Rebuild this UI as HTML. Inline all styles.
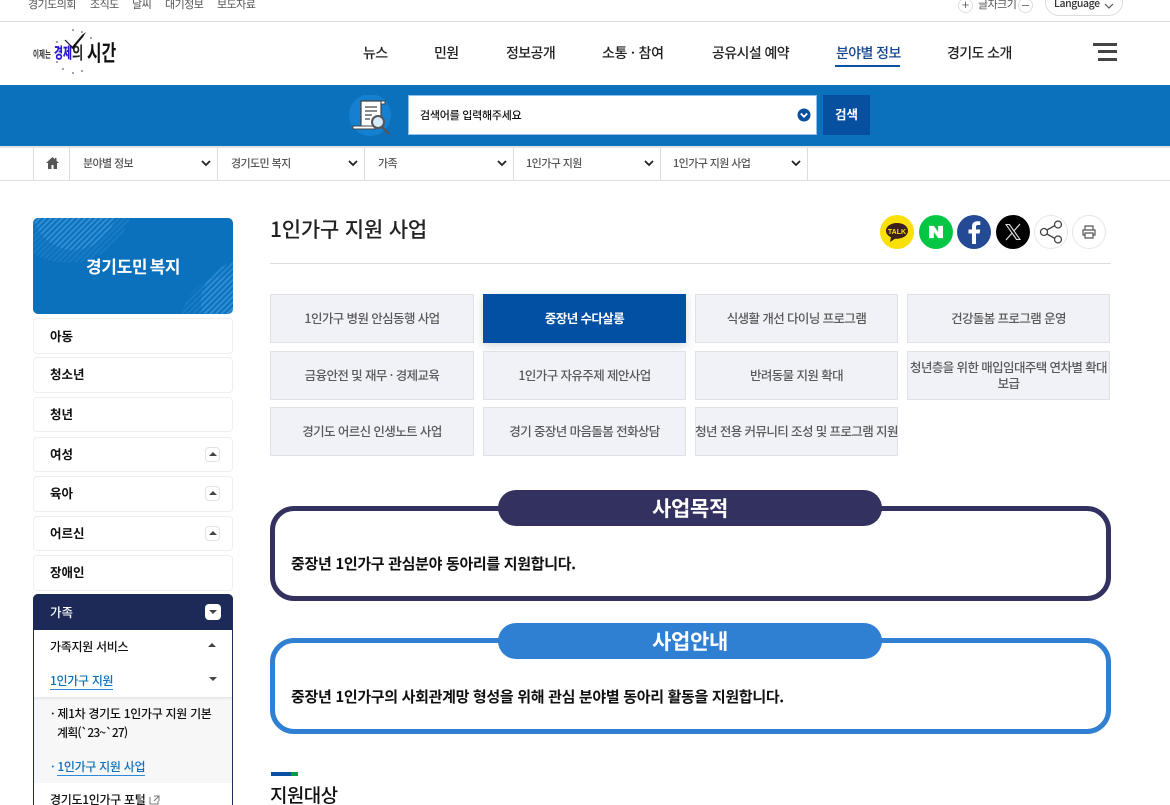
<!DOCTYPE html>
<html lang="ko"><head><meta charset="utf-8"><title>1인가구 지원 사업</title>
<style>
*{box-sizing:border-box}
html,body{margin:0;padding:0;width:1170px;height:805px;overflow:hidden}
body{background:#fff;font-family:"Liberation Sans","Noto Sans CJK KR",sans-serif;color:#111}
#w{position:relative;width:1170px;height:805px;overflow:hidden}
.a{position:absolute;white-space:nowrap}
.t{position:absolute;white-space:nowrap;font-family:"Noto Sans CJK KR","Liberation Sans",sans-serif}
.line{position:absolute;background:#ddd;height:1px}
.nav{font-size:14px;font-weight:500;color:#222;top:43px;line-height:20px;letter-spacing:-.6px}
.top{font-size:11px;color:#555;top:-4px;line-height:16px;letter-spacing:-.55px}
.bc{position:absolute;top:147px;height:34px;border-right:1px solid #ddd;font-size:11px;color:#555;line-height:32px;padding-left:13px;font-family:"Noto Sans CJK KR",sans-serif;letter-spacing:-.6px;font-weight:500}
.bc svg{position:absolute;right:5px;top:12px}
.card{position:absolute;height:49px;background:#f1f2f8;border:1px solid #e1e2e8;font-size:12.5px;color:#5a5a5a;text-align:center;display:flex;align-items:center;justify-content:center;line-height:16px;font-family:"Noto Sans CJK KR",sans-serif;letter-spacing:-.6px;white-space:nowrap;font-weight:500;padding-bottom:2px}
.side{position:absolute;left:33px;width:200px;height:36px;border:1px solid #eee;border-radius:4px;font-size:12.5px;font-weight:700;line-height:32px;padding-left:16px;font-family:"Noto Sans CJK KR",sans-serif;color:#111}
.ub{position:absolute;right:12px;top:9px;width:15px;height:15px;border:1px solid #e2e2e2;border-radius:4px;background:#fff}
.ub:after{content:"";position:absolute;left:2.500px;top:4px;border:4px solid transparent;border-top:0;border-bottom:4px solid #444}
.box{position:absolute;left:270px;width:841px;border:5px solid;border-radius:24px;background:#fff}
.pill{position:absolute;left:498px;width:384px;height:36px;border-radius:18px;color:#fff;font-size:21px;font-weight:700;text-align:center;line-height:37px;font-family:"Noto Sans CJK KR",sans-serif;letter-spacing:-.3px}
.bt{font-size:15px;font-weight:700;color:#111;line-height:22px;letter-spacing:-.32px}
.circ{position:absolute;top:215px;width:34px;height:34px;border-radius:50%;display:flex;align-items:center;justify-content:center}
.sub{font-size:12px;line-height:20px;font-weight:500;letter-spacing:-.3px}
</style></head><body><div id="w">

<span class="t top" style="left:28px">경기도의회</span>
<span class="t top" style="left:90px">조직도</span>
<span class="t top" style="left:132px">날씨</span>
<span class="t top" style="left:165px">대기정보</span>
<span class="t top" style="left:217px">보도자료</span>

<div class="a" style="left:958px;top:-2px;width:15px;height:15px;border:1px solid #ddd;border-radius:50%;color:#666;font-size:13px;line-height:12px;text-align:center">+</div>
<span class="t top" style="left:978px">글자크기</span>
<div class="a" style="left:1018px;top:-2px;width:15px;height:15px;border:1px solid #ddd;border-radius:50%"><div style="position:absolute;left:3px;top:6px;width:7px;height:1px;background:#777"></div></div>
<div class="a" style="left:1045px;top:-12px;width:78px;height:28px;border:1px solid #ddd;border-radius:14px;background:#fff"></div>
<span class="t" style="left:1054px;top:-3px;font-size:10.500px;color:#333;line-height:14px;letter-spacing:-.4px;font-weight:500">Language</span>
<svg class="a" style="left:1104px;top:3px" width="10" height="7" viewBox="0 0 10 7"><path d="M1 1l4 4 4-4" fill="none" stroke="#555" stroke-width="1.200"/></svg>
<div class="line" style="left:0;top:21px;width:1170px"></div>

<!-- logo -->
<span class="t" style="left:33px;top:44px;font-size:10px;font-weight:700;line-height:20px;color:#333;transform:scaleX(.65);transform-origin:0 0">이제는</span>
<span class="t" style="left:54px;top:42px;font-size:15px;font-weight:900;line-height:22px;color:#2a18d0;transform:scaleX(.65);transform-origin:0 0">경제</span>
<span class="t" style="left:72px;top:40px;font-size:17px;font-weight:700;line-height:24px;color:#222;transform:scaleX(.72);transform-origin:0 0">의</span>
<span class="t" style="left:87px;top:38px;font-size:22px;font-weight:700;line-height:28px;color:#111;transform:scaleX(.72);transform-origin:0 0">시간</span>
<svg class="a" style="left:30px;top:26px" width="70" height="50" viewBox="0 0 70 50">
<path d="M42 21L35 14" stroke="#111" stroke-width="1.200"/><path d="M41 22L52 9l4-3-3 5-10 12z" fill="#111"/>
<g fill="#335"><circle cx="43" cy="4" r=".8"/><circle cx="52" cy="6" r=".8"/><circle cx="61" cy="12" r=".8"/><circle cx="27" cy="16" r=".8"/><circle cx="27" cy="36" r=".8"/><circle cx="33" cy="43" r=".8"/><circle cx="43" cy="47" r=".8"/><circle cx="52" cy="45" r=".8"/></g>
</svg>

<span class="t nav" style="left:363px">뉴스</span>
<span class="t nav" style="left:434px">민원</span>
<span class="t nav" style="left:506px">정보공개</span>
<span class="t nav" style="left:602px;letter-spacing:-.25px">소통 · 참여</span>
<span class="t nav" style="left:712px">공유시설 예약</span>
<span class="t nav" style="left:836px;color:#12468f">분야별 정보</span>
<div class="a" style="left:835px;top:65px;width:65px;height:2px;background:#0b50a4"></div>
<span class="t nav" style="left:947px">경기도 소개</span>
<div class="a" style="left:1093px;top:43px;width:24px;height:3px;background:#444"></div>
<div class="a" style="left:1098px;top:50px;width:19px;height:3px;background:#444"></div>
<div class="a" style="left:1098px;top:58px;width:19px;height:3px;background:#444"></div>

<!-- search band -->
<div class="a" style="left:0;top:85px;width:1170px;height:61px;background:#0c71bc"></div>
<svg class="a" style="left:349px;top:95px" width="44" height="44" viewBox="0 0 44 44">
<circle cx="21" cy="20" r="21" fill="#1580d0"/>
<path d="M12 6h20v26H12z" fill="#fff" stroke="#444" stroke-width="1.200"/>
<path d="M4 31h22v3H5q-1.500 0-1-3z" fill="#fff" stroke="#444"/><path d="M32 6h4v3h-4z" fill="#fff" stroke="#444"/>
<path d="M16 12h12M16 16h12M16 20h7M16 24h5" stroke="#444" stroke-width="1.300"/>
<circle cx="29" cy="27" r="6" fill="#d7eafa" stroke="#555" stroke-width="2"/><path d="M33 32l7 7" stroke="#555" stroke-width="2.500"/>
</svg>
<div class="a" style="left:408px;top:95px;width:409px;height:40px;background:#fff;border:1px solid #8ec0ea"></div>
<span class="t" style="left:420px;top:106px;font-size:11px;font-weight:500;line-height:18px;color:#111;letter-spacing:-.25px">검색어를 입력해주세요</span>
<svg class="a" style="left:797px;top:108px" width="14" height="14" viewBox="0 0 14 14"><circle cx="7" cy="7" r="6.500" fill="#0a4f9e"/><path d="M3.800 5.500L7 8.700l3.200-3.200" fill="none" stroke="#fff" stroke-width="1.800"/></svg>
<div class="t" style="left:823px;top:95px;width:47px;height:40px;background:#07509f;color:#fff;font-size:12.500px;font-weight:700;text-align:center;line-height:38px">검색</div>

<!-- breadcrumb -->
<div class="line" style="left:0;top:146px;width:1170px;height:2px;background:#e4e4e4"></div>
<div class="line" style="left:0;top:180px;width:1170px"></div>
<div class="a" style="left:33px;top:147px;width:37px;height:34px;border-left:1px solid #ddd;border-right:1px solid #ddd"></div>
<svg class="a" style="left:46px;top:157px" width="13" height="12" viewBox="0 0 13 12"><path d="M6.500 0L0 6h2v6h3.500V8h2v4H11V6h2L10.500 3.700V1H9v1.300z" fill="#555"/></svg>
<div class="bc" style="left:70px;width:148px">분야별 정보<svg width="12" height="9" viewBox="0 0 12 9"><path d="M2 2L6 6l4-4" fill="none" stroke="#222" stroke-width="1.800"/></svg></div>
<div class="bc" style="left:218px;width:147px">경기도민 복지<svg width="12" height="9" viewBox="0 0 12 9"><path d="M2 2L6 6l4-4" fill="none" stroke="#222" stroke-width="1.800"/></svg></div>
<div class="bc" style="left:365px;width:149px">가족<svg width="12" height="9" viewBox="0 0 12 9"><path d="M2 2L6 6l4-4" fill="none" stroke="#222" stroke-width="1.800"/></svg></div>
<div class="bc" style="left:514px;width:147px;padding-left:12px">1인가구 지원<svg width="12" height="9" viewBox="0 0 12 9"><path d="M2 2L6 6l4-4" fill="none" stroke="#222" stroke-width="1.800"/></svg></div>
<div class="bc" style="left:661px;width:147px;padding-left:12px">1인가구 지원 사업<svg width="12" height="9" viewBox="0 0 12 9"><path d="M2 2L6 6l4-4" fill="none" stroke="#222" stroke-width="1.800"/></svg></div>

<!-- sidebar -->
<div class="a" style="left:33px;top:218px;width:200px;height:96px;background:#0c71bc;border-radius:5px;overflow:hidden">
<svg width="200" height="96" style="position:absolute;left:0;top:0"><defs><pattern id="p" width="4" height="4" patternUnits="userSpaceOnUse" patternTransform="rotate(45)"><rect width="2" height="4" fill="#5aaef0"/></pattern></defs>
<circle cx="35" cy="-20" r="65" fill="url(#p)" opacity=".18"/><circle cx="41" cy="-10" r="42" fill="url(#p)" opacity=".35"/>
<circle cx="195" cy="105" r="47" fill="url(#p)" opacity=".18"/><circle cx="210" cy="85" r="42" fill="url(#p)" opacity=".35"/></svg>
</div>
<span class="t" style="left:86px;top:254px;font-size:17px;font-weight:700;color:#fff;line-height:24px;letter-spacing:-.35px;word-spacing:-2px">경기도민 복지</span>

<div class="side" style="top:318px;height:36px;line-height:34px">아동</div>
<div class="side" style="top:357px;height:36px">청소년</div>
<div class="side" style="top:397px;height:35px">청년</div>
<div class="side" style="top:437px;height:35px">여성<i class="ub"></i></div>
<div class="side" style="top:476px;height:36px">육아<i class="ub"></i></div>
<div class="side" style="top:516px;height:35px">어르신<i class="ub"></i></div>
<div class="side" style="top:555px;height:36px">장애인</div>

<div class="a" style="left:33px;top:594px;width:200px;height:215px;border:1px solid #1d2a57;border-radius:5px 5px 0 0;background:#fff;overflow:hidden"></div>
<div class="a" style="left:33px;top:594px;width:200px;height:36px;background:#1d2a57;border-radius:5px 5px 0 0"></div>
<span class="t" style="left:50px;top:602px;font-size:12.500px;font-weight:500;color:#fff;line-height:20px">가족</span>
<div class="a" style="left:205px;top:604px;width:16px;height:16px;background:#fff;border-radius:4px"><div style="position:absolute;left:4px;top:6px;border:4px solid transparent;border-bottom:0;border-top:4px solid #444"></div></div>
<span class="t sub" style="left:50px;top:637px;color:#111">가족지원 서비스</span>
<div class="a" style="left:208px;top:643px;border:4px solid transparent;border-top:0;border-bottom:4px solid #444"></div>
<span class="t sub" style="left:50px;top:671px;color:#0c71bc;border-bottom:1px solid #2c8ad8;height:19px">1인가구 지원</span>
<div class="a" style="left:209px;top:677px;border:4px solid transparent;border-bottom:0;border-top:4px solid #444"></div>
<div class="a" style="left:34px;top:697px;width:198px;height:86px;background:#f7f7f7;box-shadow:inset 0 3px 3px -2px #ddd"></div>
<span class="t sub" style="left:51px;top:704px;color:#111;letter-spacing:-.3px">· 제1차 경기도 1인가구 지원 기본</span>
<span class="t sub" style="left:57px;top:723px;color:#111;letter-spacing:-.85px">계획(`23~`27)</span>
<span class="t sub" style="left:51px;top:757px;color:#0c71bc">· <span style="border-bottom:1px solid #2c8ad8">1인가구 지원 사업</span></span>
<span class="t sub" style="left:50px;top:790px;color:#111">경기도1인가구 포털</span>
<svg class="a" style="left:149px;top:795px" width="11" height="10" viewBox="0 0 11 10"><path d="M1 2v7h8V6M5 1h5v5M10 1L5 6" fill="none" stroke="#777"/></svg>

<!-- title -->
<span class="t" style="left:270px;top:214px;font-size:21px;font-weight:500;line-height:30px;color:#222;letter-spacing:-.2px">1인가구 지원 사업</span>
<div class="line" style="left:270px;top:263px;width:841px"></div>

<div class="circ" style="left:880px;background:#fbe007"><svg width="28" height="24" viewBox="0 0 28 24"><path d="M14 3C7.500 3 3 6.500 3 10.800c0 2.800 2 5.200 5 6.500L7 22l5-3.300h2c6.500 0 11-3.500 11-7.900S20.500 3 14 3z" fill="#3b1e1e"/><text x="14" y="14" text-anchor="middle" font-size="7" font-weight="700" fill="#fbe007" font-family="Liberation Sans">TALK</text></svg></div>
<div class="circ" style="left:919px;background:#03c644"><svg width="16" height="14" viewBox="0 0 18 16"><path d="M1 1h5.500l5 7V1H17v14h-5.500l-5-7v7H1z" fill="#fff"/></svg></div>
<div class="circ" style="left:957px;background:#234a92"><svg width="16" height="26" viewBox="0 0 16 26"><path d="M10 25V14.500h3.600l.6-4H10V8c0-1.200.4-2 2-2h2.300V2.400C13.800 2.300 12.600 2.200 11.300 2.200 8.200 2.200 6 4 6 7.500v3H2.500v4H6V25z" fill="#fff"/></svg></div>
<div class="circ" style="left:996px;background:#000"><svg width="18" height="18" viewBox="0 0 18 18"><path d="M1 1h4.800L17 17h-4.800zM3 2l10 14h2L5 2z" fill="#ddd" fill-rule="evenodd"/><path d="M16 1L10.200 7.600M7.800 10.400L2 17" stroke="#ddd" stroke-width="1.200"/></svg></div>
<div class="circ" style="left:1034px;background:#fff;border:1px solid #e6e6e6"><svg width="26" height="24" viewBox="0 0 26 24"><path d="M8 10.500L17 5.500M8 13.500L17 18.500" stroke="#444" stroke-width="1.300"/><circle cx="6" cy="12" r="3.500" fill="#fff" stroke="#444" stroke-width="1.300"/><circle cx="20" cy="4.500" r="3.500" fill="#fff" stroke="#444" stroke-width="1.300"/><circle cx="20" cy="19.500" r="3.500" fill="#fff" stroke="#444" stroke-width="1.300"/></svg></div>
<div class="circ" style="left:1072px;background:#fff;border:1px solid #e6e6e6"><svg width="16" height="16" viewBox="0 0 16 16"><path d="M4 6V2h8v4M4 11H2V6h12v5h-2M4 9h8v5H4z" fill="none" stroke="#555" stroke-width="1.200"/></svg></div>

<!-- cards -->
<div class="card" style="left:270px;top:294px;width:204px">1인가구 병원 안심동행 사업</div>
<div class="card" style="left:483px;top:294px;width:203px;background:#0250a3;border-color:#0250a3;color:#fff;font-weight:700;box-shadow:0 3px 10px rgba(40,60,110,.2)">중장년 수다살롱</div>
<div class="card" style="left:695px;top:294px;width:203px">식생활 개선 다이닝 프로그램</div>
<div class="card" style="left:907px;top:294px;width:203px">건강돌봄 프로그램 운영</div>
<div class="card" style="left:270px;top:351px;width:204px">금융안전 및 재무 · 경제교육</div>
<div class="card" style="left:483px;top:351px;width:203px">1인가구 자유주제 제안사업</div>
<div class="card" style="left:695px;top:351px;width:203px">반려동물 지원 확대</div>
<div class="card" style="left:907px;top:351px;width:203px;display:block;padding:7px 0 0">청년층을 위한 매입임대주택 연차별 확대<br>보급</div>
<div class="card" style="left:270px;top:407px;width:204px">경기도 어르신 인생노트 사업</div>
<div class="card" style="left:483px;top:407px;width:203px">경기 중장년 마음돌봄 전화상담</div>
<div class="card" style="left:695px;top:407px;width:203px">청년 전용 커뮤니티 조성 및 프로그램 지원</div>

<!-- boxes -->
<div class="box" style="top:506px;height:95px;border-color:#33315f"></div>
<div class="pill" style="top:490px;background:#33315f">사업목적</div>
<span class="t bt" style="left:291px;top:553px">중장년 1인가구 관심분야 동아리를 지원합니다.</span>

<div class="box" style="top:638px;height:96px;border-color:#2f7fd3"></div>
<div class="pill" style="top:623px;background:#2f7fd3">사업안내</div>
<span class="t bt" style="left:291px;top:686px">중장년 1인가구의 사회관계망 형성을 위해 관심 분야별 동아리 활동을 지원합니다.</span>

<div class="a" style="left:271px;top:772px;width:20px;height:4px;background:#0b50a4"></div>
<div class="a" style="left:291px;top:772px;width:7px;height:4px;background:#0a9b45"></div>
<span class="t" style="left:270px;top:781px;font-size:19px;font-weight:500;color:#111;line-height:28px;letter-spacing:-.6px">지원대상</span>

</div></body></html>
